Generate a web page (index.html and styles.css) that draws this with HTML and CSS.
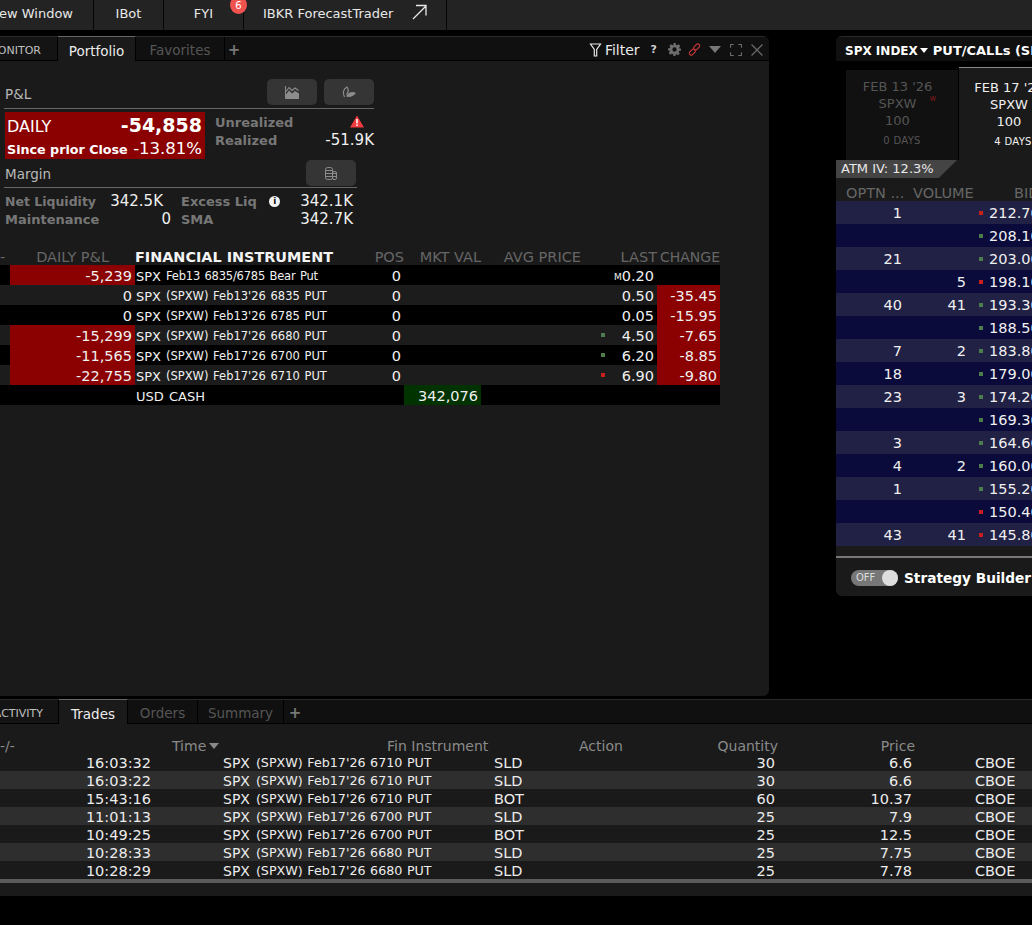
FILE: index.html
```html
<!DOCTYPE html>
<html lang="en">
<head>
<meta charset="utf-8">
<title>Trader Workstation</title>
<link rel="stylesheet" href="styles.css">
</head>
<body>
<header class="topbar">
  <div class="topitem w-new"><span>New Window</span></div>
  <div class="topitem w-ibot"><span>IBot</span></div>
  <div class="topitem w-fyi"><span>FYI</span><b class="badge">6</b></div>
  <div class="topitem w-fc"><span>IBKR ForecastTrader</span>
    <svg class="ext" viewBox="0 0 16 16" width="16" height="16"><path d="M2 15 L14.5 2.5 M5 1.5 H15 V11.5" fill="none" stroke="#e8e8e8" stroke-width="1.3"/></svg>
  </div>
</header>
<main class="workspace">
  <div class="upper">
    <section class="panel portfolio">
      <nav class="tabs">
        <div class="tab t-mon"><span>MONITOR</span></div>
        <div class="tab active t-port">Portfolio</div>
        <div class="tab t-fav">Favorites</div>
        <div class="plus">+</div>
        <div class="tools">
          <svg viewBox="0 0 12 14" width="13" height="14"><path d="M1 1 H11 L7.2 6.5 V13 H4.8 V6.5 Z" fill="none" stroke="#e8e8e8" stroke-width="1.2"/></svg>
          <span class="filter">Filter</span>
          <span class="help">?</span>
          <svg class="gear" viewBox="0 0 14 14" width="13" height="13"><path fill="#6d6d6d" fill-rule="evenodd" d="M5.8 0h2.4l.3 1.9 1.3.6L11.5 1.4l1.7 1.7-1.1 1.7.6 1.3L14 5.8v2.4l-1.9.3-.6 1.3 1.1 1.7-1.7 1.7-1.7-1.1-1.3.6L8.2 14H5.8l-.3-1.9-1.3-.6-1.7 1.1L.8 10.900l1.1-1.700-.6-1.300L0 8.200V5.800l1.900-.3.6-1.300L1.400 3.100 3.100 1.400l1.700 1.100 1.300-.6zM7 4.700a2.300 2.300 0 1 0 0 4.600 2.300 2.300 0 0 0 0-4.600z"/></svg>
          <svg class="link" viewBox="0 0 14 14" width="13" height="13"><g fill="none" stroke="#c8383c" stroke-width="1.200"><rect x="7.300" y="0.400" width="4" height="7.500" rx="2" transform="rotate(45 9.300 4.200)"/><rect x="2.700" y="6.100" width="4" height="7.500" rx="2" transform="rotate(45 4.700 9.800)"/></g></svg>
          <i class="caret big"></i>
          <svg class="max" viewBox="0 0 11 11" width="12" height="12"><path d="M0.500 3.500V0.500H3.500M7.500 0.500H10.500V3.500M10.500 7.500V10.500H7.500M3.500 10.500H0.500V7.500" fill="none" stroke="#6a6a6a"/></svg>
          <svg class="close" viewBox="0 0 11 11" width="12" height="12"><path d="M0.500 0.500L10.500 10.500M10.500 0.500L0.500 10.500" stroke="#6a6a6a" stroke-width="1.100"/></svg>
        </div>
      </nav>
      <div class="summary">
        <div class="sumhead pnl-head">
          <span class="sumtitle">P&amp;L</span>
          <div class="btns">
            <button class="ibtn"><svg viewBox="0 0 14 13" width="14" height="13"><path d="M0.500 0V12.500H14" fill="none" stroke="#8c8c8c"/><path d="M1 5.500L4 1.500L7 4.500L10 2L13.500 4.500" fill="none" stroke="#8c8c8c" stroke-width="1.100"/><path d="M1 8.500L4 4.500L7 7.500L10 5L14 7.500V12H1Z" fill="#8c8c8c"/></svg></button>
            <button class="ibtn"><svg viewBox="0 0 14 12" width="14" height="12"><path d="M2.500 11C0.500 7.500 1 3 5 1C7 3.500 6.500 6 4.500 8.500" fill="none" stroke="#8c8c8c" stroke-width="1.200"/><path d="M4 10.500C6 6.500 10 5 14 7C12 10 8 11.800 4 10.500Z" fill="#8c8c8c"/></svg></button>
          </div>
        </div>
        <div class="pnl-body">
          <div class="daily">
            <div class="dline"><span class="dlabel">DAILY</span><b class="dvalue">-54,858</b></div>
            <div class="dline"><b class="dsince">Since prior Close</b><span class="dpct">-13.81%</span></div>
          </div>
          <div class="kv pnl-kv">
            <div class="kvrow"><b>Unrealized</b><svg class="warn" viewBox="0 0 14 12" width="14" height="13"><path d="M7 0L14 12H0Z" fill="#f23b3f"/><path d="M6.200 3.500H7.800V8H6.200ZM6.200 9H7.800V10.500H6.200Z" fill="#fff"/></svg></div>
            <div class="kvrow"><b>Realized</b><span>-51.9K</span></div>
          </div>
        </div>
        <div class="sumhead margin-head">
          <span class="sumtitle">Margin</span>
          <div class="btns">
            <button class="ibtn"><svg viewBox="0 0 12 13" width="12" height="13"><g fill="none" stroke="#8c8c8c"><rect x="0.500" y="0.500" width="7" height="12" rx="2"/><rect x="7.500" y="4.500" width="4" height="8" rx="1.500"/><path d="M0.500 3.500H7.500M0.500 6.500H11.500M0.500 9.500H11.500"/></g></svg></button>
          </div>
        </div>
        <div class="margin-body">
          <div class="kvrow c1"><b class="tight">Net Liquidity</b><span class="nudge">342.5K</span></div>
          <div class="kvrow c2"><b>Excess Liq</b><i class="info">i</i><span>342.1K</span></div>
          <div class="kvrow c1"><b>Maintenance</b><span>0</span></div>
          <div class="kvrow c2"><b>SMA</b><span>342.7K</span></div>
        </div>
      </div>

      <div class="ptable">
        <div class="pr phead">
          <div class="c-a">-</div><div class="c-pl">DAILY P&amp;L</div><div class="c-fi hl">FINANCIAL INSTRUMENT</div><div class="c-pos">POS</div><div class="c-mv">MKT VAL</div><div class="c-ap">AVG PRICE</div><div class="c-last">LAST</div><div class="c-ch">CHANGE</div>
        </div>
        <div class="pr"><div class="c-a"></div><div class="c-pl red">-5,239</div><div class="c-fi bp"><span class="sy">SPX</span> Feb13 6835/6785 Bear Put</div><div class="c-pos">0</div><div class="c-mv"></div><div class="c-ap"></div><div class="c-last"><small>M</small>0.20</div><div class="c-ch"></div></div>
        <div class="pr alt"><div class="c-a"></div><div class="c-pl">0</div><div class="c-fi"><span class="sy">SPX</span> (SPXW) Feb13'26 6835 PUT</div><div class="c-pos">0</div><div class="c-mv"></div><div class="c-ap"></div><div class="c-last">0.50</div><div class="c-ch red">-35.45</div></div>
        <div class="pr"><div class="c-a"></div><div class="c-pl">0</div><div class="c-fi"><span class="sy">SPX</span> (SPXW) Feb13'26 6785 PUT</div><div class="c-pos">0</div><div class="c-mv"></div><div class="c-ap"></div><div class="c-last">0.05</div><div class="c-ch red">-15.95</div></div>
        <div class="pr alt"><div class="c-a"></div><div class="c-pl red">-15,299</div><div class="c-fi"><span class="sy">SPX</span> (SPXW) Feb17'26 6680 PUT</div><div class="c-pos">0</div><div class="c-mv"></div><div class="c-ap"></div><div class="c-last"><i class="tick up"></i>4.50</div><div class="c-ch red">-7.65</div></div>
        <div class="pr"><div class="c-a"></div><div class="c-pl red">-11,565</div><div class="c-fi"><span class="sy">SPX</span> (SPXW) Feb17'26 6700 PUT</div><div class="c-pos">0</div><div class="c-mv"></div><div class="c-ap"></div><div class="c-last"><i class="tick up"></i>6.20</div><div class="c-ch red">-8.85</div></div>
        <div class="pr alt"><div class="c-a"></div><div class="c-pl red">-22,755</div><div class="c-fi"><span class="sy">SPX</span> (SPXW) Feb17'26 6710 PUT</div><div class="c-pos">0</div><div class="c-mv"></div><div class="c-ap"></div><div class="c-last"><i class="tick dn"></i>6.90</div><div class="c-ch red">-9.80</div></div>
        <div class="pr"><div class="c-a"></div><div class="c-pl"></div><div class="c-fi"><span class="sy">USD CASH</span></div><div class="c-pos"></div><div class="c-mv green">342,076</div><div class="c-ap"></div><div class="c-last"></div><div class="c-ch"></div></div>
      </div>
    </section>

    <section class="panel options">
      <div class="ohead"><b class="otitle">SPX INDEX</b><i class="caret white"></i><b class="otitle2">PUT/CALLs (SPX)</b></div>
      <div class="exps">
        <div class="exp off"><div>FEB 13 '26</div><div>SPXW<sup>w</sup></div><div>100</div><div class="days">0 DAYS</div></div>
        <div class="exp on"><div>FEB 17 '26</div><div>SPXW</div><div>100</div><div class="days">4 DAYS</div></div>
      </div>
      <div class="atm">ATM IV: 12.3%</div>
      <div class="ochain">
        <div class="or ohd"><div class="o-oi">OPTN ...</div><div class="o-vol">VOLUME</div><div class="o-bid">BID</div></div>
        <div class="or"><div class="o-oi">1</div><div class="o-vol"></div><div class="o-bid"><i class="tick dn"></i>212.70</div></div>
        <div class="or"><div class="o-oi"></div><div class="o-vol"></div><div class="o-bid"><i class="tick up"></i>208.10</div></div>
        <div class="or"><div class="o-oi">21</div><div class="o-vol"></div><div class="o-bid"><i class="tick up"></i>203.00</div></div>
        <div class="or"><div class="o-oi"></div><div class="o-vol">5</div><div class="o-bid"><i class="tick dn"></i>198.10</div></div>
        <div class="or"><div class="o-oi">40</div><div class="o-vol">41</div><div class="o-bid"><i class="tick up"></i>193.30</div></div>
        <div class="or"><div class="o-oi"></div><div class="o-vol"></div><div class="o-bid"><i class="tick up"></i>188.50</div></div>
        <div class="or"><div class="o-oi">7</div><div class="o-vol">2</div><div class="o-bid"><i class="tick up"></i>183.80</div></div>
        <div class="or"><div class="o-oi">18</div><div class="o-vol"></div><div class="o-bid"><i class="tick up"></i>179.00</div></div>
        <div class="or"><div class="o-oi">23</div><div class="o-vol">3</div><div class="o-bid"><i class="tick up"></i>174.20</div></div>
        <div class="or"><div class="o-oi"></div><div class="o-vol"></div><div class="o-bid"><i class="tick up"></i>169.30</div></div>
        <div class="or"><div class="o-oi">3</div><div class="o-vol"></div><div class="o-bid"><i class="tick up"></i>164.60</div></div>
        <div class="or"><div class="o-oi">4</div><div class="o-vol">2</div><div class="o-bid"><i class="tick up"></i>160.00</div></div>
        <div class="or"><div class="o-oi">1</div><div class="o-vol"></div><div class="o-bid"><i class="tick up"></i>155.20</div></div>
        <div class="or"><div class="o-oi"></div><div class="o-vol"></div><div class="o-bid"><i class="tick dn"></i>150.40</div></div>
        <div class="or"><div class="o-oi">43</div><div class="o-vol">41</div><div class="o-bid"><i class="tick dn"></i>145.80</div></div>
      </div>
      <div class="ofoot">
        <div class="toggle"><span>OFF</span><i></i></div>
        <b class="sb">Strategy Builder</b>
      </div>
    </section>
  </div>

  <section class="panel trades">
    <nav class="tabs">
      <div class="tab t-act"><span>ACTIVITY</span></div>
      <div class="tab active t-tr">Trades</div>
      <div class="tab t-ord">Orders</div>
      <div class="tab t-sum">Summary</div>
      <div class="plus">+</div>
    </nav>
    <div class="tbody">
      <div class="thd"><div>-/-</div><div>Time<i class="caret grey"></i></div><div>Fin Instrument</div><div>Action</div><div class="x-q">Quantity</div><div class="x-p">Price</div></div>
      <div class="tr"><div class="x-a"></div><div class="x-t">16:03:32</div><div class="x-i"><span class="sy">SPX</span> (SPXW) Feb17'26 6710 PUT</div><div class="x-ac">SLD</div><div class="x-q">30</div><div class="x-p">6.6</div><div class="x-e">CBOE</div></div>
      <div class="tr alt2"><div class="x-a"></div><div class="x-t">16:03:22</div><div class="x-i"><span class="sy">SPX</span> (SPXW) Feb17'26 6710 PUT</div><div class="x-ac">SLD</div><div class="x-q">30</div><div class="x-p">6.6</div><div class="x-e">CBOE</div></div>
      <div class="tr"><div class="x-a"></div><div class="x-t">15:43:16</div><div class="x-i"><span class="sy">SPX</span> (SPXW) Feb17'26 6710 PUT</div><div class="x-ac">BOT</div><div class="x-q">60</div><div class="x-p">10.37</div><div class="x-e">CBOE</div></div>
      <div class="tr alt2"><div class="x-a"></div><div class="x-t">11:01:13</div><div class="x-i"><span class="sy">SPX</span> (SPXW) Feb17'26 6700 PUT</div><div class="x-ac">SLD</div><div class="x-q">25</div><div class="x-p">7.9</div><div class="x-e">CBOE</div></div>
      <div class="tr"><div class="x-a"></div><div class="x-t">10:49:25</div><div class="x-i"><span class="sy">SPX</span> (SPXW) Feb17'26 6700 PUT</div><div class="x-ac">BOT</div><div class="x-q">25</div><div class="x-p">12.5</div><div class="x-e">CBOE</div></div>
      <div class="tr alt2"><div class="x-a"></div><div class="x-t">10:28:33</div><div class="x-i"><span class="sy">SPX</span> (SPXW) Feb17'26 6680 PUT</div><div class="x-ac">SLD</div><div class="x-q">25</div><div class="x-p">7.75</div><div class="x-e">CBOE</div></div>
      <div class="tr last"><div class="x-a"></div><div class="x-t">10:28:29</div><div class="x-i"><span class="sy">SPX</span> (SPXW) Feb17'26 6680 PUT</div><div class="x-ac">SLD</div><div class="x-q">25</div><div class="x-p">7.78</div><div class="x-e">CBOE</div></div>
    </div>
    <div class="hscroll"></div>
    <div class="tfoot"></div>
  </section>
</main>
</body>
</html>
```
FILE: styles.css
```css
* { box-sizing: border-box; }
html, body { margin: 0; padding: 0; background: #000; }
body {
  width: 1032px; height: 925px; overflow: hidden;
  font-family: "DejaVu Sans", Verdana, sans-serif;
  font-size: 14px; color: #f0f0f0;
}
.topbar { display: flex; height: 30px; background: #232323; }
.topitem {
  display: flex; align-items: center; justify-content: center;
  height: 30px; border-right: 1px solid #050505;
  font-size: 13px; color: #e8e8e8; position: relative; white-space: nowrap;
  padding-bottom: 4px;
}
.w-new { width: 94px; justify-content: flex-end; padding-right: 20px; overflow: hidden; }
.w-ibot { width: 70px; }
.w-fyi { width: 80px; }
.w-fc { width: 203px; gap: 18px; justify-content: flex-start; padding-left: 19px; }
.badge {
  position: absolute; right: -4px; top: -4px; width: 17px; height: 18px; border-radius: 50%;
  background: #ef5350; color: #fff; font-weight: 400; font-size: 10px;
  display: flex; align-items: center; justify-content: center;
}
.ext { margin-bottom: 2px; }

.workspace { display: flex; flex-direction: column; }
.upper { display: flex; height: 669px; padding-top: 6px; }
.panel { background: #1a1a1a; }
.portfolio { width: 769px; height: 660px; border-radius: 0 6px 6px 0; flex: none; overflow: hidden; }
.tabs {
  display: flex; align-items: stretch; height: 25px; background: #101010;
  border-top: 1px solid #2a2a2a; border-bottom: 1px solid #000;
}
.tab {
  display: flex; align-items: center; justify-content: center; font-size: 13.500px;
  color: #555; border-right: 1px solid #000; white-space: nowrap; overflow: hidden; padding-top: 3px;
}
.tab.active { background: #1a1a1a; color: #ececec; border-top: 1px solid #666; margin-top: -1px; margin-bottom: -1px; }
.t-mon { width: 58px; justify-content: flex-end; padding-right: 16px; font-size: 11px; color: #c0c0c0; background: #141414; }
.t-port { width: 78px; }
.t-fav { width: 89px; }
.plus { width: 18px; color: #777; font-size: 15px; font-weight: 700; display: flex; align-items: center; justify-content: center; padding-top: 2px; }
.trades .plus { width: 22px; }
.tools { margin-left: auto; display: flex; align-items: center; padding: 2px 6px 0 0; }
.filter { font-size: 14px; color: #eaeaea; margin-left: 3px; }
.help { font-size: 11px; font-weight: 700; color: #d0d0d0; margin-left: 11px; }
.gear { margin-left: 11px; }
.link { margin-left: 7px; }
.caret { display: inline-block; width: 0; height: 0; border-left: 5px solid transparent; border-right: 5px solid transparent; border-top: 6px solid #888; }
.caret.big { margin-left: 8px; border-left-width: 6px; border-right-width: 6px; border-top-width: 7px; border-top-color: #777; }
.max { margin-left: 9px; }
.close { margin-left: 9px; }

.summary { width: 375px; padding: 18px 0 0 0; height: 187px; }
.sumhead { display: flex; align-items: flex-end; justify-content: space-between; border-bottom: 1px solid #666; margin-left: 4px; }
.pnl-head { width: 370px; height: 30px; }
.margin-head { width: 353px; height: 29px; }
.sumtitle { font-size: 13.500px; color: #b8b8b8; padding-left: 1px; }
.pnl-head .sumtitle { margin-bottom: 6px; }
.margin-head .sumtitle { margin-bottom: 5px; }
.btns { display: flex; gap: 7px; }
.pnl-head .btns { margin-bottom: 3px; }
.margin-head .btns { margin-bottom: 1px; margin-right: 1px; }
.ibtn {
  width: 50px; height: 26px; background: #353535; border: 0; border-radius: 5px; padding: 0;
  display: flex; align-items: center; justify-content: center;
}
.pnl-body { display: flex; margin-left: 5px; margin-top: 3px; width: 369px; }
.daily { width: 200px; height: 47px; background: #8b0000; padding: 2px 3px 0 2px; }
.dline { display: flex; justify-content: space-between; align-items: baseline; white-space: nowrap; }
.dline + .dline { margin-top: 3px; }
.dlabel { font-size: 16px; color: #fff; }
.dvalue { font-size: 19px; color: #fff; }
.dsince { font-size: 12.700px; color: #fff; }
.dpct { font-size: 16.500px; color: #fff; }
.kv { flex: 1; padding-left: 10px; padding-top: 1px; }
.kvrow { display: flex; justify-content: space-between; align-items: center; height: 18px; white-space: nowrap; }
.kvrow b { font-size: 13px; color: #777; }
.kvrow span { font-size: 15px; color: #f0f0f0; }
.kvrow b.tight { font-size: 12.500px; }
.kvrow span.nudge { margin-right: 8px; }
.warn { margin: 0 10px 2px 0; }
.margin-body { display: grid; grid-template-columns: 166px 172px; margin-left: 5px; padding-top: 4px; column-gap: 10px; }
.kvrow.c2 b { margin-right: auto; }
.info { width: 11px; height: 11px; border-radius: 50%; background: #f2f2f2; color: #111; font: 700 9px/11px "DejaVu Sans", sans-serif; text-align: center; margin-right: 20px; }

.ptable { width: 720px; }
.pr { display: grid; grid-template-columns: 10px 125px 239px 30px 77px 100px 76px 63px; height: 20px; background: #000; white-space: nowrap; align-items: stretch; }
.pr.phead { height: 17px; background: transparent; }
.pr.alt { background: #1c1c1c; }
.pr > div { display: flex; align-items: center; justify-content: flex-end; font-size: 14.500px; padding: 1px 3px 0 0; }
.pr .c-fi { justify-content: flex-start; font-size: 11.500px; padding: 2px 0 0 1px; word-spacing: 1px; }
.pr .c-fi.bp { letter-spacing: -.2px; word-spacing: 1px; }
.sy { font-size: 13px; margin-right: 5px; letter-spacing: 0; }
.phead.pr > div { font-size: 14.500px; color: #666; padding: 0; }
.phead.pr .hl { font-size: 14.400px; font-weight: 700; color: #f4f4f4; word-spacing: 0; }
.phead.pr .c-a { justify-content: flex-start; }
.phead.pr .c-pl { padding-right: 26px; }
.phead.pr .c-ch { font-size: 14px; }
.red { background: #8b0000; }
.green { background: #003300; }
.c-last { position: relative; }
.c-last small { font-size: 9px; margin-top: 2px; }
.c-last .tick { position: absolute; left: 20px; top: 8px; }
.tick { display: inline-block; width: 4px; height: 4px; }
.tick.up { background: #4d7d4d; }
.tick.dn { background: #c81e1e; }

.options { width: 230px; height: 560px; margin-left: 67px; flex: none; border-radius: 6px 0 0 6px; overflow: hidden; background: #1a1a1a; }
.ohead { height: 25px; background: #101010; border-top: 1px solid #2a2a2a; display: flex; align-items: center; padding: 3px 0 0 9px; white-space: nowrap; font-size: 12px; }
.otitle, .otitle2 { color: #fff; font-size: 12px; }
.otitle2 { font-size: 13px; margin-left: 5px; }
.ohead .caret.white { border-top-color: #fff; border-left-width: 4px; border-right-width: 4px; border-top-width: 5px; margin-left: 2px; }
.exps { display: flex; padding: 6px 0 0 10px; height: 99px; align-items: stretch; background: #000; }
.exp { text-align: center; font-size: 13px; line-height: 17px; padding-top: 11px; }
.exp.off { width: 113px; background: #111; color: #555; border-right: 1px solid #000; margin-top: 3px; padding: 8px 9px 0 0; position: relative; }
.exp.off sup { position: absolute; right: 22px; top: 25px; font-size: 8px; color: #7a1c1c; line-height: 1; }
.exp.off .days { padding-left: 9px; }
.exp.on { width: 100px; background: #1a1a1a; color: #f0f0f0; border-top: 1px solid #888; }
.exp.on .days { padding-left: 8px; }
.days { font-size: 10px; margin-top: 3px; letter-spacing: .3px; }
.atm {
  width: 121px; height: 18px; background: #444; color: #e8e8e8; font-size: 13px; padding-left: 5px; line-height: 18px;
  clip-path: polygon(0 0, 100% 0, 85% 100%, 0 100%); white-space: nowrap;
}
.or { display: grid; grid-template-columns: 66px 64px 100px; height: 23px; background: #0b0b3b; white-space: nowrap; }
.or:nth-child(even) { background: #212145; }
.or.ohd { background: transparent; height: 23px; padding-top: 6px; }
.or > div { display: flex; align-items: center; justify-content: flex-end; font-size: 14.500px; color: #f0f0f0; }
.or.ohd > div { font-size: 14.500px; color: #666; }
.or.ohd .o-oi { justify-content: flex-start; padding-left: 10px; white-space: nowrap; }
.or.ohd .o-vol { justify-content: flex-start; padding-left: 11px; }
.or .o-bid { justify-content: flex-start; padding-left: 13px; gap: 6px; }
.or.ohd .o-bid { padding-left: 48px; }
.ofoot { border-top: 2px solid #777; margin-top: 10px; height: 40px; display: flex; align-items: center; padding: 2px 0 0 15px; gap: 6px; }
.toggle { width: 47px; height: 16px; border-radius: 8px; background: #777; position: relative; color: #ddd; font-size: 10px; line-height: 16px; padding-left: 5px; }
.toggle i { position: absolute; right: 0; top: 0; width: 16px; height: 16px; border-radius: 50%; background: #ddd; }
.sb { color: #fff; font-size: 13.700px; white-space: nowrap; }

.trades { height: 197px; }
.t-act { width: 59px; justify-content: flex-end; padding-right: 15px; font-size: 11px; color: #c0c0c0; background: #141414; }
.t-tr { width: 69px; }
.t-ord { width: 70px; }
.t-sum { width: 86px; }
.tbody { height: 155px; padding-top: 11px; overflow: hidden; }
.thd { display: grid; grid-template-columns: 172px 215px 192px 100px 99px 137px; height: 18px; white-space: nowrap; padding-top: 3px; }
.thd > div { display: flex; align-items: center; font-size: 14px; color: #8a8a8a; }
.tr { display: grid; grid-template-columns: 30px 121px 302px 118px 207px 137px 117px; height: 18px; white-space: nowrap; }
.tr.alt2 { background: #2e2e2e; }
.tr > div { display: flex; align-items: center; font-size: 14.500px; color: #ececec; padding-top: 1px; }
.x-t, .x-q, .x-p { justify-content: flex-end; }
.tr .x-i { font-size: 12.700px; padding-left: 72px; word-spacing: .5px; }
.tr .x-i .sy { font-size: 14px; margin-right: 6px; }
.tr.last .x-i { height: 16px; overflow: hidden; align-items: flex-start; padding-top: 2px; }
.x-ac { padding-left: 41px; }
.x-e { padding-left: 60px; }
.tr .x-q { padding-right: 3px; }
.tr .x-p { padding-right: 3px; }
.caret.grey { margin-left: 3px; }
.hscroll { height: 4px; background: #5a5a5a; }
.tfoot { height: 13px; background: #1a1a1a; }
```
